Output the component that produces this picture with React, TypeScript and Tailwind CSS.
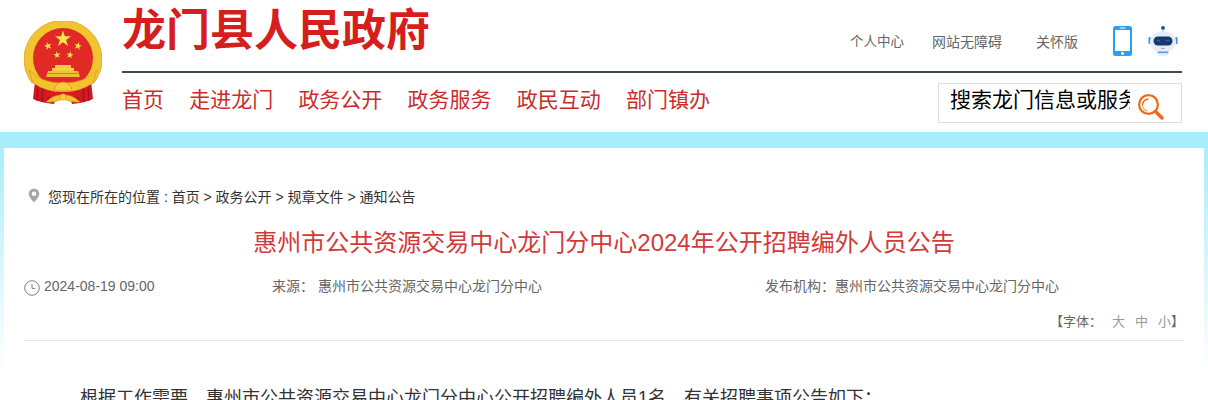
import React from "react";

const FONT = "font-['Liberation_Sans','Noto_Sans_CJK_SC',sans-serif]";

function star(cx: number, cy: number, r: number, rot = 0) {
  const pts: string[] = [];
  for (let i = 0; i < 10; i++) {
    const rad = i % 2 === 0 ? r : r * 0.382;
    const a = ((-90 + rot + i * 36) * Math.PI) / 180;
    pts.push(`${(cx + rad * Math.cos(a)).toFixed(2)},${(cy + rad * Math.sin(a)).toFixed(2)}`);
  }
  return pts.join(" ");
}

function Emblem() {
  return (
    <svg width="78" height="84" viewBox="0 0 78 84" className="block shrink-0">
      <path d="M8 62 A39 39 0 1 1 70 62 L39 74 Z" fill="#f2c530" />
      <path d="M8 62 A39 39 0 1 1 70 62" fill="none" stroke="#dca11e" strokeWidth="0.8" />
      <circle cx="39" cy="37" r="30" fill="#e12a26" />
      <path d="M11 60 L9 78 Q17 82 30 83 L34 70 Z" fill="#cf1821" />
      <path d="M67 60 L69 78 Q61 82 48 83 L44 70 Z" fill="#cf1821" />
      <path d="M14 65 L13 80 M19 67 L18 81 M25 69 L24 82 M64 65 L65 80 M59 67 L60 81 M53 69 L54 82" stroke="#96101a" strokeWidth="0.9" />
      <polygon points={star(39, 18, 8.5)} fill="#fbe34b" />
      <polygon points={star(24, 25, 4.2, -15)} fill="#fbe34b" />
      <polygon points={star(54, 25, 4.2, 15)} fill="#fbe34b" />
      <polygon points={star(33, 34, 3.8, -10)} fill="#fbe34b" />
      <polygon points={star(46, 34, 3.8, 10)} fill="#fbe34b" />
      <path d="M28 50 L50 50 L50 47 L47 47 L47 44 L31 44 L31 47 L28 47 Z" fill="#f6cf47" />
      <path d="M22 56 L56 56 L54 50 L24 50 Z" fill="#f1bf33" />
      <rect x="24" y="52" width="30" height="1" fill="#d6811a" />
      <path d="M5 49 Q17 62 39 62 Q61 62 73 49 L69 62 Q56 71 39 71 Q22 71 9 62 Z" fill="#f3c230" stroke="#d6901a" strokeWidth="0.6" />
      <path d="M30 70 A9 9 0 0 1 48 70 Z" fill="#f6ce3a" stroke="#d6811a" strokeWidth="0.7" />
      <rect x="22" y="71" width="34" height="5" fill="#d61b21" />
      <path d="M22 81 Q30 73 39 74 Q48 73 56 81 Q47 82 39 78 Q31 82 22 81 Z" fill="#f3c033" stroke="#d6901a" strokeWidth="0.5" />
      <circle cx="39" cy="76" r="3.2" fill="#f6ce3a" stroke="#d6811a" strokeWidth="0.5" />
    </svg>
  );
}

function PhoneIcon() {
  return (
    <svg width="20" height="30" viewBox="0 0 20 30" className="block">
      <rect x="0" y="0" width="19" height="30" rx="2.5" fill="#2a9ff0" />
      <rect x="2" y="4" width="15" height="21" fill="#ffffff" />
      <rect x="6.5" y="1.6" width="6" height="1" rx="0.5" fill="#ffffff" />
      <circle cx="9.5" cy="27.5" r="1.4" fill="#ffffff" />
    </svg>
  );
}

function RobotIcon() {
  return (
    <svg width="30" height="30" viewBox="0 0 30 30" className="block">
      <circle cx="15" cy="2" r="1.9" fill="#1c4a86" />
      <rect x="14.5" y="3" width="1" height="4" fill="#a9bdd6" />
      <rect x="0.5" y="11" width="2.2" height="7" rx="1.1" fill="#3a8fe8" />
      <rect x="27.3" y="11" width="2.2" height="7" rx="1.1" fill="#3a8fe8" />
      <ellipse cx="15" cy="16" rx="13" ry="10.5" fill="#e8edf4" />
      <rect x="5.5" y="10.5" width="19" height="9" rx="4.5" fill="#17396f" />
      <path d="M9 15 q1.5 -1.5 3 0 M18 15 q1.5 -1.5 3 0" stroke="#3a8fe8" strokeWidth="0.8" fill="none" />
      <path d="M13 22 q2 1.5 4 0" stroke="#7b8da5" strokeWidth="0.7" fill="none" />
      <rect x="9.5" y="25.5" width="11" height="1.8" rx="0.9" fill="#4f9bee" />
      <rect x="10" y="28" width="10" height="1.6" rx="0.8" fill="#dfe6ef" />
    </svg>
  );
}

function SearchIcon() {
  return (
    <svg width="28" height="28" viewBox="0 0 28 28" className="block">
      <circle cx="11.5" cy="11.5" r="9.4" fill="none" stroke="#ee6a16" strokeWidth="2.2" />
      <path d="M5.5 12 a6 6 0 0 1 6 -6" fill="none" stroke="#ee6a16" strokeWidth="1.6" />
      <path d="M5.5 12 a6 6 0 0 0 5 5.8" fill="none" stroke="#f5a36f" strokeWidth="1.2" />
      <path d="M18.5 18.5 L25 25" stroke="#ee6a16" strokeWidth="3.4" strokeLinecap="round" />
    </svg>
  );
}

function PinIcon() {
  return (
    <svg width="12" height="15" viewBox="0 0 12 15" className="block">
      <path d="M6 0.5 A5.3 5.3 0 0 1 11.3 5.8 C11.3 9 8 12 6 14.5 C4 12 0.7 9 0.7 5.8 A5.3 5.3 0 0 1 6 0.5 Z M6 3.6 A2.2 2.2 0 1 0 6 8 A2.2 2.2 0 1 0 6 3.6 Z" fill="#a6a6a6" fillRule="evenodd" />
    </svg>
  );
}

function ClockIcon() {
  return (
    <svg width="16" height="16" viewBox="0 0 16 16" className="block">
      <circle cx="8" cy="8" r="7.3" fill="none" stroke="#808080" strokeWidth="1" />
      <path d="M8 3.8 V8.4 H11.4" fill="none" stroke="#808080" strokeWidth="1" />
    </svg>
  );
}

const NAV = ["首页", "走进龙门", "政务公开", "政务服务", "政民互动", "部门镇办"];

export default function App() {
  return (
    <div className={`${FONT} h-[400px] w-[1208px] overflow-hidden bg-white`}>
      <header className="flex h-[132px] pl-6 pr-[26px]">
        <div className="mt-[21px] w-[98px] shrink-0">
          <Emblem />
        </div>
        <div className="flex min-w-0 flex-1 flex-col">
          <div className="flex h-[71px] items-start justify-between">
            <h1 className="mt-[4px] text-[44px] font-bold leading-[54px] text-[#d51f1f]">龙门县人民政府</h1>
            <div className="mt-[26px] flex items-center">
              <span className="mt-[2px] text-[13.5px] leading-[20px] text-[#666666]">个人中心</span>
              <span className="ml-[28px] mt-[2px] text-[14px] leading-[20px] text-[#666666]">网站无障碍</span>
              <span className="ml-[34px] mt-[2px] text-[14px] leading-[20px] text-[#666666]">关怀版</span>
              <div className="ml-[35px]"><PhoneIcon /></div>
              <div className="ml-[15px] mr-[4px]"><RobotIcon /></div>
            </div>
          </div>
          <div className="h-[2px] bg-[#3d4a57]" />
          <div className="flex items-start justify-between">
            <nav className="mt-[12px] flex gap-[25.2px] text-[21px] leading-[30px] text-[#c92c2c]">
              {NAV.map((n) => (
                <a key={n}>{n}</a>
              ))}
            </nav>
            <div className="mt-[10px] flex h-[40px] w-[244px] items-start border border-[#dddddd] bg-white pl-[11px]">
              <div className="mt-[1px] w-[180px] overflow-hidden whitespace-nowrap text-[21px] leading-[30px] text-black">搜索龙门信息或服务</div>
              <div className="ml-[7px] mt-[9px]"><SearchIcon /></div>
            </div>
          </div>
        </div>
      </header>

      <div className="h-[268px] bg-gradient-to-b from-[#a6eefb] from-[16px] to-white to-[240px] px-1 pt-4">
        <main className="h-full overflow-hidden bg-white px-5">
          <div className="flex items-start pt-[40px]">
            <div className="ml-[4px]"><PinIcon /></div>
            <p className="ml-[8px] text-[14px] leading-[18px] text-[#333333]">您现在所在的位置 : 首页 &gt; 政务公开 &gt; 规章文件 &gt; 通知公告</p>
          </div>
          <h2 className="mt-[21px] text-center text-[24px] font-normal leading-[32px] text-[#d23a3a]">惠州市公共资源交易中心龙门分中心2024年公开招聘编外人员公告</h2>
          <div className="mt-[16px] flex h-[22px] items-center text-[14px] text-[#666666]">
            <div className="flex w-[248px] items-center">
              <div className="mt-[3px]"><ClockIcon /></div>
              <span className="ml-1">2024-08-19 09:00</span>
            </div>
            <div className="w-[493px] whitespace-nowrap">来源：<span className="ml-[4px]">惠州市公共资源交易中心龙门分中心</span></div>
            <div className="whitespace-nowrap">发布机构：<span>惠州市公共资源交易中心龙门分中心</span></div>
          </div>
          <div className="mt-[15px] flex h-[20px] items-center justify-end gap-[10px] text-[13px] text-[#666666]">
            <span>【字体：</span>
            <span className="text-[#999999]">大</span>
            <span className="text-[#999999]">中</span>
            <span className="text-[#999999]">小<span className="text-[#666666]">】</span></span>
          </div>
          <div className="mt-[8px] h-px bg-[#e5e5e5]" />
          <p className="ml-[56px] mt-[41px] whitespace-nowrap text-[18px] leading-[32px] text-[#333333]">根据工作需要，惠州市公共资源交易中心龙门分中心公开招聘编外人员1名，有关招聘事项公告如下：</p>
        </main>
      </div>
    </div>
  );
}
